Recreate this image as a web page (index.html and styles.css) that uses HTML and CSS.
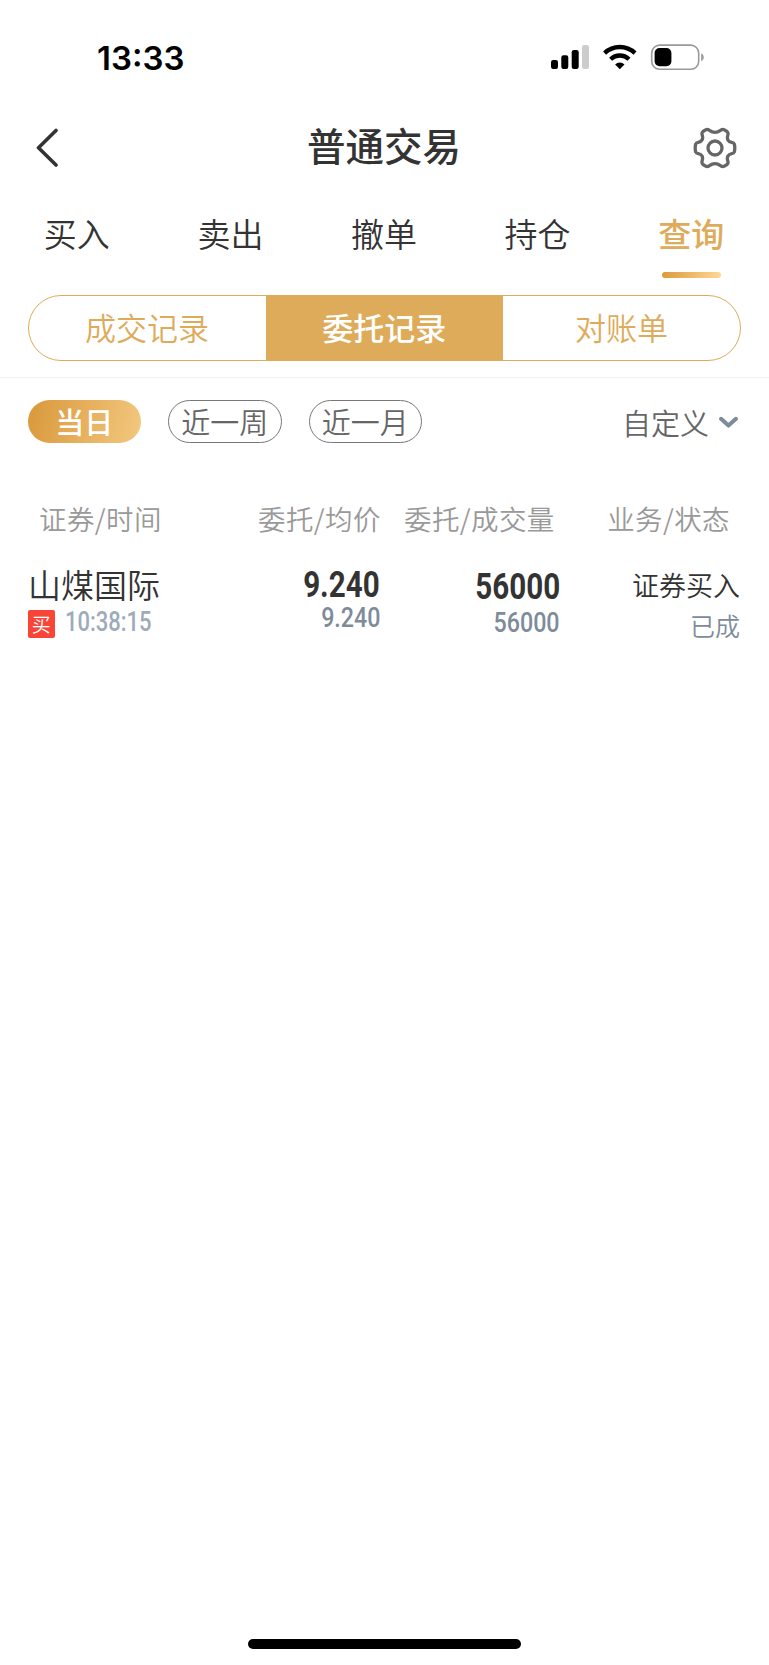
FILE: index.html
```html
<!DOCTYPE html>
<html lang="zh-CN">
<head>
<meta charset="utf-8">
<title>普通交易</title>
<link rel="stylesheet" href="styles.css">
</head>
<body>
<div class="screen">
  <header class="status">
    <div class="clock">13:33</div>
    <svg class="status-icons" width="156" height="28" viewBox="0 0 156 28">
      <rect x="0" y="16" width="7" height="9" rx="2.2"/>
      <rect x="10.3" y="11.3" width="7" height="13.7" rx="2.2"/>
      <rect x="20.7" y="6" width="7" height="19" rx="2.2"/>
      <rect x="31" y="1" width="7" height="24" rx="2.2" fill="#ccc"/>
      <g fill="none" stroke="#000" stroke-width="4.3">
        <path d="M53.6 9.1a22 22 0 0 1 30.4 0"/>
        <path d="M59.6 15.2a13.3 13.3 0 0 1 18.4 0"/>
      </g>
      <path d="M68.8 25.2l-4.7-4.8a6.8 6.8 0 0 1 9.4 0z"/>
      <rect x="100.7" y="1.1" width="47" height="24.2" rx="8" fill="none" stroke="#999" stroke-width="1.6"/>
      <rect x="103.6" y="4" width="16.8" height="18.2" rx="5"/>
      <path d="M150.2 9.6c3.4 1 3.4 6.5 0 7.5z" fill="#999"/>
    </svg>
  </header>
  <nav class="navbar">
    <svg class="back" width="24" height="40" viewBox="0 0 24 40"><path d="M20 2.5L2.5 19.8L20 37" fill="none" stroke="#333" stroke-width="3.6" stroke-linecap="round" stroke-linejoin="round"/></svg>
    <h1 class="title">普通交易</h1>
    <svg class="gear" width="44" height="42" viewBox="0 0 44 42"><g fill="none" stroke="#666" stroke-width="3.3" stroke-linejoin="round"><circle cx="22" cy="21" r="7"/><path d="M13 2.700C16 1.200 16.500 5.300 22 5.300S28 1.200 31 2.700L34 4.500C37 6.700 33 9.200 34.900 12.900S40.300 14.300 41.300 17C41.800 19 41.800 23 41.300 25C40.300 27.700 37 25.300 34.900 29.100S37 35.300 34 37.500L31 39.300C28 40.800 27.500 36.700 22 36.700S16 40.800 13 39.300L10 37.500C7 35.300 11 32.800 9.100 29.100S3.700 27.700 2.700 25C2.200 23 2.200 19 2.700 17C3.700 14.300 7 16.700 9.100 12.900S7 6.700 10 4.500Z"/></g></svg>
  </nav>
  <div class="tabs">
    <div class="tab">买入</div>
    <div class="tab">卖出</div>
    <div class="tab">撤单</div>
    <div class="tab">持仓</div>
    <div class="tab active">查询</div>
  </div>
  <div class="segments">
    <div class="segment">成交记录</div>
    <div class="segment selected">委托记录</div>
    <div class="segment">对账单</div>
  </div>
  <div class="filters">
    <div class="pill on">当日</div>
    <div class="pill">近一周</div>
    <div class="pill">近一月</div>
    <div class="custom">自定义
      <svg width="21" height="14" viewBox="0 0 21 14"><path d="M3 3.8L10.5 10.6L18 3.8" fill="none" stroke="#7d8b9a" stroke-width="4" stroke-linecap="round" stroke-linejoin="round"/></svg>
    </div>
  </div>
  <div class="thead">
    <div class="th-name">证券/时间</div>
    <div class="th-price">委托/均价</div>
    <div class="th-volume">委托/成交量</div>
    <div class="th-state">业务/状态</div>
  </div>
  <div class="row">
    <div class="cell name">
      <div class="stock">山煤国际</div>
      <div class="meta"><span class="badge">买</span><span class="num time">10:38:15</span></div>
    </div>
    <div class="cell price">
      <div class="num big">9.240</div>
      <div class="num small">9.240</div>
    </div>
    <div class="cell volume">
      <div class="num big">56000</div>
      <div class="num small">56000</div>
    </div>
    <div class="cell state">
      <div class="action">证券买入</div>
      <div class="done">已成</div>
    </div>
  </div>
  <div class="home"></div>
</div>
</body>
</html>
```
FILE: styles.css
```css
* { box-sizing: border-box; }
body {
  margin: 0;
  background: #fff;
  color: #333;
  font-family: "Noto Sans CJK SC", sans-serif;
  font-weight: 350;
  white-space: nowrap;
}
.screen {
  display: flex;
  flex-direction: column;
  width: 769px;
  height: 1665px;
  overflow: hidden;
}
.status {
  display: flex;
  justify-content: space-between;
  height: 110px;
  padding: 44px 62px 0 97px;
}
.clock {
  height: 28px;
  font: 600 33px/28px Inter, sans-serif;
  color: #000;
}
.navbar {
  display: flex;
  align-items: center;
  justify-content: space-between;
  height: 76px;
  padding: 0 32px 0 36px;
}
.back { margin-right: 15px; }
.gear { margin-top: -1px; }
.title {
  margin: -8px 0 0;
  font-size: 38.5px;
  font-weight: 500;
  line-height: 68px;
}
.tabs {
  display: flex;
  height: 108.5px;
  margin-right: 1px;
}
.tab {
  display: flex;
  flex: 1;
  flex-direction: column;
  align-items: center;
  padding-top: 23px;
  font-size: 33px;
  line-height: 48px;
}
.tab.active {
  color: #deab5b;
  font-weight: 500;
}
.tab.active::after {
  content: "";
  width: 59px;
  height: 6px;
  margin-top: 15px;
  border-radius: 3px;
  background: linear-gradient(105deg, #db9a3b, #ffd896);
}
.segments {
  display: flex;
  height: 66.5px;
  margin: 0 28px 0 27.5px;
  border: 1px solid #deab5b;
  border-radius: 34px;
  overflow: hidden;
}
.segment {
  flex: 1;
  color: #deab5b;
  font-size: 31px;
  line-height: 62px;
  text-align: center;
}
.segment.selected {
  background: #deab5b;
  color: #fff;
  font-weight: 500;
}
.filters {
  display: flex;
  gap: 27px;
  height: 89px;
  margin-top: 16px;
  padding: 22px 27px 0 27.5px;
  border-top: 1px solid #f1f1f1;
}
.pill {
  width: 113.5px;
  height: 43px;
  border: 1px solid #777;
  border-radius: 22px;
  color: #666;
  font-size: 29px;
  line-height: 40px;
  text-align: center;
}
.pill.on {
  border: 0;
  background: linear-gradient(105deg, #d9983a, #f3c880);
  color: #fff;
  font-weight: 500;
  line-height: 42px;
}
.custom {
  display: flex;
  align-items: center;
  gap: 9px;
  height: 43px;
  margin: 0 3px 0 auto;
  color: #666;
  font-size: 29px;
}
.thead {
  display: flex;
  height: 94px;
  padding: 32px 39px 0 39px;
  color: #999;
  font-size: 27.5px;
  letter-spacing: 0.4px;
  line-height: 40px;
}
.th-name { width: 219px; }
.th-price { width: 146px; }
.th-volume { flex: 1; }
.row {
  display: flex;
  padding: 0 29px 0 28px;
}
.cell {
  display: flex;
  flex-direction: column;
}
.name { width: 190px; }
.price { width: 162px; align-items: flex-end; }
.volume { width: 180px; align-items: flex-end; }
.state { flex: 1; align-items: flex-end; }
.stock {
  font-size: 33px;
  line-height: 48px;
}
.meta {
  display: flex;
  margin: 2px 0 0 -0.5px;
}
.badge {
  width: 27.5px;
  height: 28px;
  margin-right: 10px;
  border-radius: 2px;
  background: #f84538;
  color: #fff;
  font-size: 19px;
  line-height: 28px;
  text-align: center;
}
.num {
  font-family: Roboto, sans-serif;
  transform: scaleX(0.8);
  transform-origin: right center;
}
.big {
  font-size: 37px;
  font-weight: 700;
  line-height: 36px;
}
.small {
  color: #7d8b9a;
  font-size: 28px;
  font-weight: 500;
  line-height: 28px;
  transform: scaleX(0.83);
}
.price .big { padding-top: 7px; }
.price .small { padding-top: 1px; }
.volume .big { padding-top: 9px; }
.volume .small { padding-top: 4px; }
.time {
  color: #9dabba;
  font-size: 27.5px;
  font-weight: 500;
  line-height: 24px;
  transform-origin: left center;
}
.action {
  font-size: 27px;
  line-height: 49px;
}
.done {
  margin-top: -3px;
  color: #7d8b9a;
  font-size: 25px;
  line-height: 38px;
}
.home {
  width: 273px;
  height: 10px;
  margin: auto 248px 16px;
  border-radius: 5px;
  background: #000;
}
```
